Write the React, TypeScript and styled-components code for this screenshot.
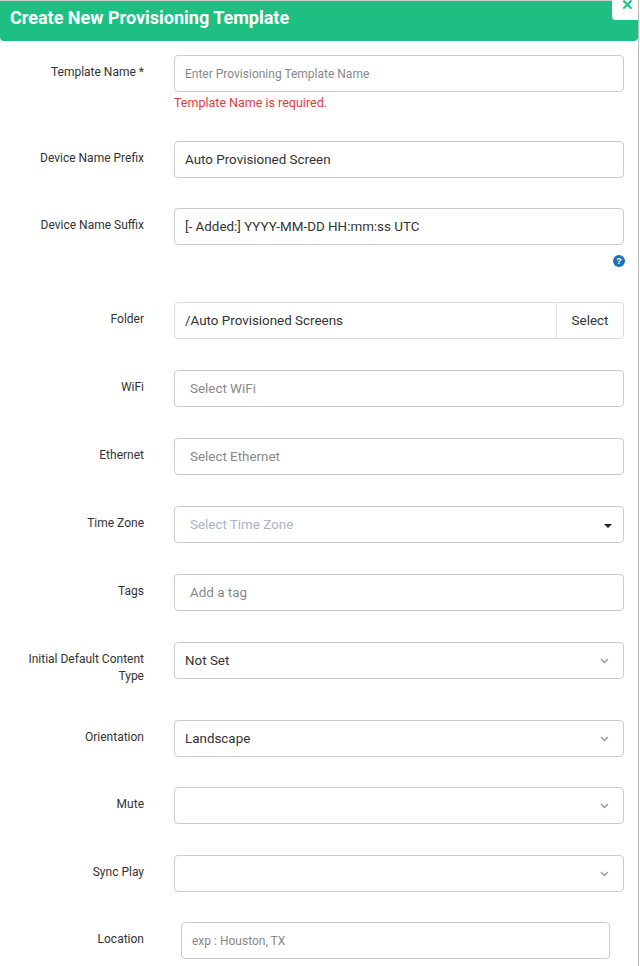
import React from "react";
import styled, { createGlobalStyle } from "styled-components";

const Global = createGlobalStyle`
  body { margin: 0; background: #fff; font-family: Roboto, "Liberation Sans", sans-serif; }
`;

const Modal = styled.div`
  width: 639px;
  min-height: 966px;
  border-right: 1px solid #bbb;
  box-sizing: border-box;
  position: relative;
  overflow: hidden;
`;

const Header = styled.div`
  background: #1dbf82;
  height: 41px;
  border-top: 1px solid #ccc;
  box-sizing: border-box;
  border-radius: 0 0 4px 4px;
  display: flex;
  align-items: center;
  padding: 0 0 7px 10px;
  color: #fff;
  font-size: 18px;
  font-weight: 700;
`;

const Close = styled.div`
  position: absolute;
  top: -8px;
  right: -4px;
  width: 30px;
  height: 28px;
  background: #fff;
  border-radius: 4px;
  color: #1dbf82;
  font-size: 15px;
  font-weight: 700;
  text-align: center;
  line-height: 26px;
`;

const Form = styled.div`
  padding-top: 14px;
`;

const Row = styled.div<{ $gap?: number }>`
  display: grid;
  grid-template-columns: 144px 450px;
  column-gap: 30px;
  margin-bottom: ${(p) => p.$gap ?? 30}px;
`;

const Label = styled.div`
  text-align: right;
  font-size: 12px;
  color: #333;
  line-height: 17px;
  padding: 9px 0 0 24px;
`;

const Field = styled.div<{ $left?: number; $right?: number }>`
  position: relative;
  margin-left: ${(p) => p.$left ?? 0}px;
  margin-right: ${(p) => p.$right ?? 0}px;
`;

const Input = styled.div<{ $ph?: boolean; $small?: boolean; $muted?: boolean }>`
  height: 37px;
  box-sizing: border-box;
  border: 1px solid #ccc;
  border-radius: 4px;
  display: flex;
  align-items: center;
  padding: 0 10px 0 ${(p) => (p.$ph && !p.$small ? 15 : 10)}px;
  font-size: ${(p) => (p.$small ? 12 : 13.4)}px;
  color: ${(p) => (p.$muted ? "#aab4bd" : p.$ph ? "#888" : "#333")};
  position: relative;
`;

const Chevron = styled.svg`
  position: absolute;
  right: 14px;
  top: 15px;
`;

const Caret = styled.div`
  position: absolute;
  right: 11px;
  top: 17px;
  border-left: 4px solid transparent;
  border-right: 4px solid transparent;
  border-top: 4px solid #222;
`;

const Error = styled.div`
  color: #e4393c;
  font-size: 12.5px;
  margin-top: 3px;
  height: 16px;
`;

const Help = styled.div`
  display: flex;
  justify-content: flex-end;
  padding-top: 10px;
  height: 17px;
`;

const Group = styled.div`
  display: flex;
  height: 37px;
  border: 1px solid #ddd;
  border-radius: 4px;
  box-sizing: border-box;
  font-size: 13.4px;
  color: #333;
`;

const GroupText = styled.div`
  flex: 1;
  display: flex;
  align-items: center;
  padding-left: 10px;
`;

const GroupBtn = styled.div`
  width: 66px;
  border-left: 1px solid #e4e4e4;
  display: flex;
  align-items: center;
  justify-content: center;
`;

const Down = () => (
  <Chevron width="9" height="6" viewBox="0 0 9 6">
    <path d="M1 1l3.5 3.5L8 1" fill="none" stroke="#999" strokeWidth="1.4" />
  </Chevron>
);

export default function App() {
  return (
    <Modal>
      <Global />
      <Header>Create New Provisioning Template</Header>
      <Close>✕</Close>
      <Form>
        <Row $gap={30}>
          <Label>Template Name *</Label>
          <Field>
            <Input $ph $small>Enter Provisioning Template Name</Input>
            <Error>Template Name is required.</Error>
          </Field>
        </Row>
        <Row>
          <Label>Device Name Prefix</Label>
          <Input>Auto Provisioned Screen</Input>
        </Row>
        <Row $gap={30}>
          <Label>Device Name Suffix</Label>
          <Field>
            <Input>[- Added:] YYYY-MM-DD HH:mm:ss UTC</Input>
            <Help>
              <svg width="12" height="12" viewBox="0 0 12 12" style={{ marginRight: -1 }}>
                <circle cx="6" cy="6" r="6" fill="#1d72b8" />
                <text x="6" y="9.3" fontSize="9" fontWeight="700" fill="#fff" textAnchor="middle" fontFamily="Liberation Sans, sans-serif">?</text>
              </svg>
            </Help>
          </Field>
        </Row>
        <Row $gap={31}>
          <Label>Folder</Label>
          <Group>
            <GroupText>/Auto Provisioned Screens</GroupText>
            <GroupBtn>Select</GroupBtn>
          </Group>
        </Row>
        <Row $gap={31}>
          <Label>WiFi</Label>
          <Input $ph>Select WiFi</Input>
        </Row>
        <Row $gap={31}>
          <Label>Ethernet</Label>
          <Input $ph>Select Ethernet</Input>
        </Row>
        <Row $gap={31}>
          <Label>Time Zone</Label>
          <Input $ph $muted>Select Time Zone<Caret /></Input>
        </Row>
        <Row $gap={31}>
          <Label>Tags</Label>
          <Input $ph>Add a tag</Input>
        </Row>
        <Row $gap={35}>
          <Label>Initial Default Content Type</Label>
          <Input>Not Set<Down /></Input>
        </Row>
        <Row $gap={30}>
          <Label>Orientation</Label>
          <Input>Landscape<Down /></Input>
        </Row>
        <Row $gap={31}>
          <Label>Mute</Label>
          <Input><Down /></Input>
        </Row>
        <Row $gap={30}>
          <Label>Sync Play</Label>
          <Input><Down /></Input>
        </Row>
        <Row>
          <Label>Location</Label>
          <Field $left={7} $right={14}>
            <Input $small $ph>exp : Houston, TX</Input>
          </Field>
        </Row>
      </Form>
    </Modal>
  );
}
